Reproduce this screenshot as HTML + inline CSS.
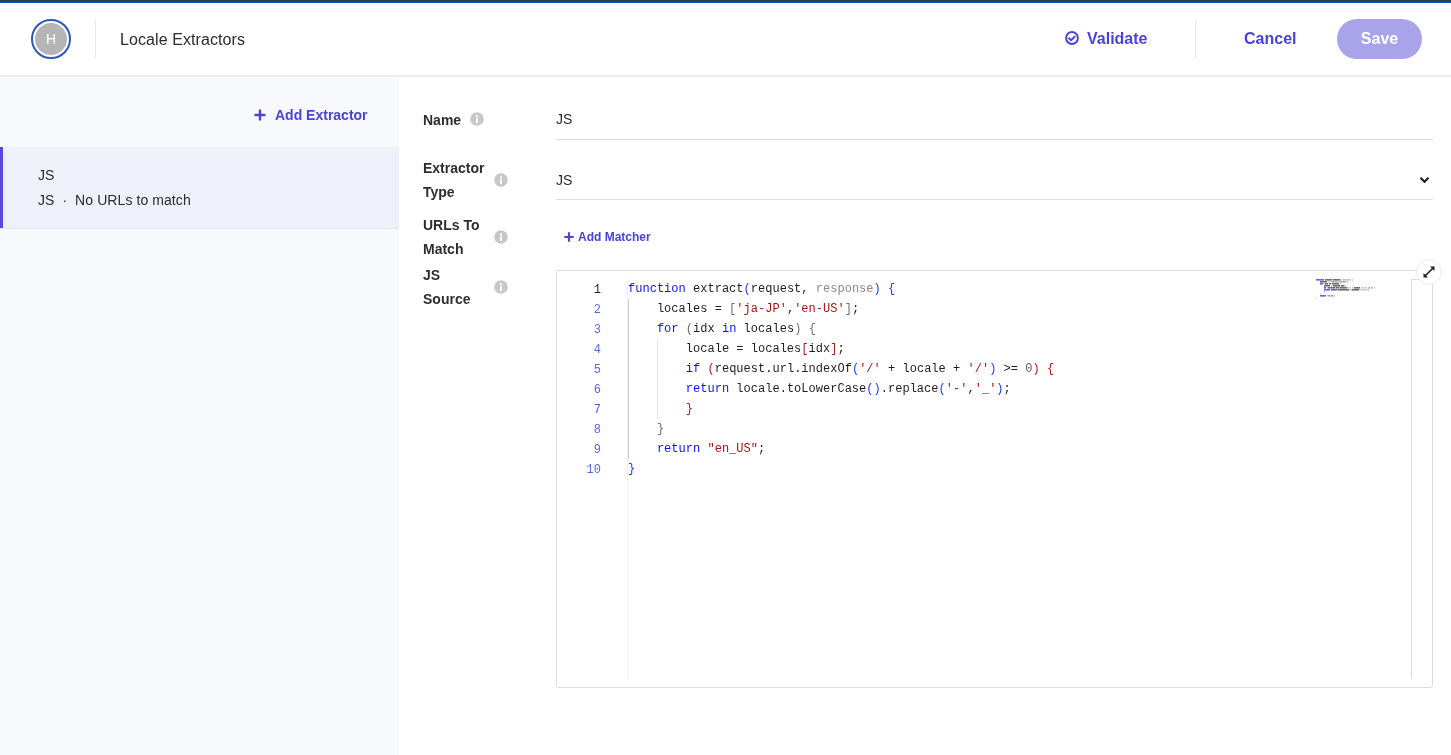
<!DOCTYPE html>
<html><head><meta charset="utf-8">
<style>
*{box-sizing:border-box;margin:0;padding:0}
html,body{width:1451px;height:755px;overflow:hidden;background:#fff;-webkit-font-smoothing:antialiased;font-family:"Liberation Sans",sans-serif;color:#222}
.abs{position:absolute}
.title,.btnlink,.save,.additem,.sel,.label,.field,.editor,.avatar{will-change:transform}
.topbar{position:absolute;left:0;top:0;width:1451px;height:2px;background:#3c3c3c}
.topline{position:absolute;left:0;top:2px;width:1451px;height:1px;background:#0a55c8}
.hborder{position:absolute;left:0;top:75px;width:1451px;height:2px;background:#ececec}
.avatar{position:absolute;left:31px;top:19px;width:40px;height:40px;border-radius:50%;border:2px solid #2d58b9;background:#fff}
.avatar .in{position:absolute;left:2px;top:2px;width:32px;height:32px;border-radius:50%;background:#b5b5b5;color:#fff;font-size:14px;text-align:center;line-height:33px}
.vdiv{position:absolute;width:1px;background:#e8e8e8}
.title{position:absolute;left:120px;top:31px;font-size:16px;color:#2b2b2b;white-space:nowrap;letter-spacing:0.08px}
.btnlink{position:absolute;color:#4b43d3;font-weight:bold;font-size:16px;white-space:nowrap}
.save{position:absolute;left:1337px;top:19px;width:85px;height:40px;border-radius:20px;background:#a9a3ea;color:#fff;font-weight:bold;font-size:16px;text-align:center;line-height:40px}
.sidebar{position:absolute;left:0;top:77px;width:399px;height:678px;background:#f8f9fc}
.additem{position:absolute;left:275px;top:107px;color:#4b43d3;font-weight:bold;font-size:14px;white-space:nowrap}
.sel{position:absolute;left:0;top:147px;width:399px;height:82px;background:#eef1fa;border-bottom:1px solid #e4e6ec}
.sel .bar{position:absolute;left:0;top:0;width:3px;height:81px;background:#5849dc}
.sel .t1{position:absolute;left:38px;top:20px;font-size:14px;color:#2b2b2b;letter-spacing:0.08px}
.sel .t2{position:absolute;left:38px;top:45px;font-size:14px;color:#2b2b2b;white-space:nowrap;letter-spacing:0.08px}
.label{position:absolute;left:423px;font-weight:bold;font-size:14px;color:#2e2e2e;line-height:24px}
.info{position:absolute;width:14px;height:14px}
.field{position:absolute;left:556px;width:877px;border-bottom:1px solid #dcdcdc}
.field .v{position:absolute;left:0;font-size:14px;color:#2b2b2b}
.editor{position:absolute;left:556px;top:270px;width:877px;height:418px;border:1px solid #dcdcdc;border-radius:3px;background:#fff}
.code{position:absolute;left:71px;top:8px;font-family:"Liberation Mono",monospace;font-size:12px;line-height:20px;white-space:pre;color:#1e1e1e;letter-spacing:0.02px}
.ln{position:absolute;left:0;top:9px;width:44px;text-align:right;font-family:"Liberation Mono",monospace;font-size:12px;line-height:20px;color:#5b68d8;white-space:pre}
.kw{color:#0f0fff}.b1{color:#1a3cf5}.b2{color:#707070}.b3{color:#a82020}.s{color:#a31515}.p{color:#8a8a8a}.n{color:#5a5a5a}
</style></head><body>
<div class="topbar"></div><div class="topline"></div>
<div class="hborder"></div>
<div class="avatar"><div class="in">H</div></div>
<div class="vdiv" style="left:95px;top:20px;height:38px"></div>
<div class="title">Locale Extractors</div>
<svg class="abs" style="left:1065px;top:31px" width="14" height="14" viewBox="0 0 14 14"><circle cx="7" cy="7" r="5.9" fill="none" stroke="#4b43d3" stroke-width="2"/><path d="M4 7.3 L6.1 9.2 L9.7 5.6" fill="none" stroke="#4b43d3" stroke-width="2" stroke-linecap="round" stroke-linejoin="round"/></svg>
<div class="btnlink" style="left:1087px;top:30px">Validate</div>
<div class="vdiv" style="left:1195px;top:20px;height:38px"></div>
<div class="btnlink" style="left:1244px;top:30px">Cancel</div>
<div class="save">Save</div>

<div class="sidebar"></div>
<svg class="abs" style="left:254px;top:109px" width="12" height="12" viewBox="0 0 12 12"><path d="M6 0.5V11.5M0.5 6H11.5" stroke="#4b43d3" stroke-width="2.4"/></svg>
<div class="additem">Add Extractor</div>
<div class="sel"><div class="bar"></div><div class="t1">JS</div><div class="t2">JS &nbsp;·&nbsp; No URLs to match</div></div>

<div class="label" style="top:108px">Name</div>
<svg class="info" style="left:470px;top:112px" viewBox="0 0 14 14"><circle cx="7" cy="7" r="6.8" fill="#c8c8c8"/><rect x="6" y="3.3" width="2" height="2" fill="#fff"/><rect x="6" y="6.3" width="2" height="4.6" fill="#fff"/></svg>
<div class="field" style="top:100px;height:40px"><div class="v" style="top:11px">JS</div></div>

<div class="label" style="top:156px">Extractor<br>Type</div>
<svg class="info" style="left:494px;top:173px" viewBox="0 0 14 14"><circle cx="7" cy="7" r="6.8" fill="#c8c8c8"/><rect x="6" y="3.3" width="2" height="2" fill="#fff"/><rect x="6" y="6.3" width="2" height="4.6" fill="#fff"/></svg>
<div class="field" style="top:160px;height:40px"><div class="v" style="top:12px">JS</div></div>
<svg class="abs" style="left:1419px;top:176px" width="11" height="8" viewBox="0 0 11 8"><path d="M1.5 1.8 L5.5 5.8 L9.5 1.8" fill="none" stroke="#1e1e1e" stroke-width="2.2"/></svg>

<div class="label" style="top:213px">URLs To<br>Match</div>
<svg class="info" style="left:494px;top:230px" viewBox="0 0 14 14"><circle cx="7" cy="7" r="6.8" fill="#c8c8c8"/><rect x="6" y="3.3" width="2" height="2" fill="#fff"/><rect x="6" y="6.3" width="2" height="4.6" fill="#fff"/></svg>
<svg class="abs" style="left:564px;top:232px" width="10" height="10" viewBox="0 0 10 10"><path d="M5 0.3V9.7M0.3 5H9.7" stroke="#4b43d3" stroke-width="2.2"/></svg>
<div class="btnlink" style="left:578px;top:230px;font-size:12px">Add Matcher</div>

<div class="label" style="top:263px">JS<br>Source</div>
<svg class="info" style="left:494px;top:280px" viewBox="0 0 14 14"><circle cx="7" cy="7" r="6.8" fill="#c8c8c8"/><rect x="6" y="3.3" width="2" height="2" fill="#fff"/><rect x="6" y="6.3" width="2" height="4.6" fill="#fff"/></svg>

<div class="editor">
<div class="abs" style="left:70px;top:8px;width:1px;height:400px;background:#f0f0f0"></div>
<div class="abs" style="left:71px;top:28px;width:1px;height:160px;background:#d0d0d0"></div>
<div class="abs" style="left:100px;top:68px;width:1px;height:80px;background:#e3e3e3"></div>
<div class="abs" style="left:854px;top:8px;width:22px;height:400px;border-left:1px solid #dcdcdc;border-top:1px solid #dcdcdc"></div>
<div class="ln"><span style="color:#1e1e1e">1</span>
2
3
4
5
6
7
8
9
10</div>
<div class="code"><span class="kw">function</span> extract<span class="b1">(</span>request, <span class="p">response</span><span class="b1">)</span> <span class="b1">{</span>
    locales = <span class="b2">[</span><span class="s">&#x27;ja-JP&#x27;</span>,<span class="s">&#x27;en-US&#x27;</span><span class="b2">]</span>;
    <span class="kw">for</span> <span class="b2">(</span>idx <span class="kw">in</span> locales<span class="b2">)</span> <span class="b2">{</span>
        locale = locales<span class="b3">[</span>idx<span class="b3">]</span>;
        <span class="kw">if</span> <span class="b3">(</span>request.url.indexOf<span class="b1">(</span><span class="s">&#x27;/&#x27;</span> + locale + <span class="s">&#x27;/&#x27;</span><span class="b1">)</span> &gt;= <span class="n">0</span><span class="b3">)</span> <span class="b3">{</span>
        <span class="kw">return</span> locale.toLowerCase<span class="b1">()</span>.replace<span class="b1">(</span><span class="s">&#x27;-&#x27;</span>,<span class="s">&#x27;_&#x27;</span><span class="b1">)</span>;
        <span class="b3">}</span>
    <span class="b2">}</span>
    <span class="kw">return</span> <span class="s">&quot;en_US&quot;</span>;
<span class="b1">}</span></div>
<svg class="abs" style="left:759px;top:8px" width="70" height="22" viewBox="0 0 70 22"><rect x="0" y="0" width="1" height="1.6" fill="#2020ff" fill-opacity="0.7"/><rect x="1" y="0" width="1" height="1.6" fill="#2020ff" fill-opacity="0.7"/><rect x="2" y="0" width="1" height="1.6" fill="#2020ff" fill-opacity="0.7"/><rect x="3" y="0" width="1" height="1.6" fill="#2020ff" fill-opacity="0.7"/><rect x="4" y="0" width="1" height="1.6" fill="#2020ff" fill-opacity="0.7"/><rect x="5" y="0" width="1" height="1.6" fill="#2020ff" fill-opacity="0.7"/><rect x="6" y="0" width="1" height="1.6" fill="#2020ff" fill-opacity="0.7"/><rect x="7" y="0" width="1" height="1.6" fill="#2020ff" fill-opacity="0.7"/><rect x="9" y="0" width="1" height="1.6" fill="#333" fill-opacity="0.7"/><rect x="10" y="0" width="1" height="1.6" fill="#333" fill-opacity="0.7"/><rect x="11" y="0" width="1" height="1.6" fill="#333" fill-opacity="0.7"/><rect x="12" y="0" width="1" height="1.6" fill="#333" fill-opacity="0.7"/><rect x="13" y="0" width="1" height="1.6" fill="#333" fill-opacity="0.7"/><rect x="14" y="0" width="1" height="1.6" fill="#333" fill-opacity="0.7"/><rect x="15" y="0" width="1" height="1.6" fill="#333" fill-opacity="0.7"/><rect x="16" y="0" width="1" height="1.6" fill="#5070f0" fill-opacity="0.35"/><rect x="17" y="0" width="1" height="1.6" fill="#333" fill-opacity="0.7"/><rect x="18" y="0" width="1" height="1.6" fill="#333" fill-opacity="0.7"/><rect x="19" y="0" width="1" height="1.6" fill="#333" fill-opacity="0.7"/><rect x="20" y="0" width="1" height="1.6" fill="#333" fill-opacity="0.7"/><rect x="21" y="0" width="1" height="1.6" fill="#333" fill-opacity="0.7"/><rect x="22" y="0" width="1" height="1.6" fill="#333" fill-opacity="0.7"/><rect x="23" y="0" width="1" height="1.6" fill="#333" fill-opacity="0.7"/><rect x="24" y="0" width="1" height="1.6" fill="#333" fill-opacity="0.35"/><rect x="26" y="0" width="1" height="1.6" fill="#aaa" fill-opacity="0.7"/><rect x="27" y="0" width="1" height="1.6" fill="#aaa" fill-opacity="0.7"/><rect x="28" y="0" width="1" height="1.6" fill="#aaa" fill-opacity="0.7"/><rect x="29" y="0" width="1" height="1.6" fill="#aaa" fill-opacity="0.7"/><rect x="30" y="0" width="1" height="1.6" fill="#aaa" fill-opacity="0.7"/><rect x="31" y="0" width="1" height="1.6" fill="#aaa" fill-opacity="0.7"/><rect x="32" y="0" width="1" height="1.6" fill="#aaa" fill-opacity="0.7"/><rect x="33" y="0" width="1" height="1.6" fill="#aaa" fill-opacity="0.7"/><rect x="34" y="0" width="1" height="1.6" fill="#5070f0" fill-opacity="0.35"/><rect x="36" y="0" width="1" height="1.6" fill="#5070f0" fill-opacity="0.35"/><rect x="4" y="2" width="1" height="1.6" fill="#333" fill-opacity="0.7"/><rect x="5" y="2" width="1" height="1.6" fill="#333" fill-opacity="0.7"/><rect x="6" y="2" width="1" height="1.6" fill="#333" fill-opacity="0.7"/><rect x="7" y="2" width="1" height="1.6" fill="#333" fill-opacity="0.7"/><rect x="8" y="2" width="1" height="1.6" fill="#333" fill-opacity="0.7"/><rect x="9" y="2" width="1" height="1.6" fill="#333" fill-opacity="0.7"/><rect x="10" y="2" width="1" height="1.6" fill="#333" fill-opacity="0.7"/><rect x="12" y="2" width="1" height="1.6" fill="#333" fill-opacity="0.35"/><rect x="14" y="2" width="1" height="1.6" fill="#888" fill-opacity="0.35"/><rect x="15" y="2" width="1" height="1.6" fill="#777" fill-opacity="0.35"/><rect x="16" y="2" width="1" height="1.6" fill="#777" fill-opacity="0.7"/><rect x="17" y="2" width="1" height="1.6" fill="#777" fill-opacity="0.7"/><rect x="18" y="2" width="1" height="1.6" fill="#777" fill-opacity="0.35"/><rect x="19" y="2" width="1" height="1.6" fill="#777" fill-opacity="0.7"/><rect x="20" y="2" width="1" height="1.6" fill="#777" fill-opacity="0.7"/><rect x="21" y="2" width="1" height="1.6" fill="#777" fill-opacity="0.35"/><rect x="22" y="2" width="1" height="1.6" fill="#333" fill-opacity="0.35"/><rect x="23" y="2" width="1" height="1.6" fill="#777" fill-opacity="0.35"/><rect x="24" y="2" width="1" height="1.6" fill="#777" fill-opacity="0.7"/><rect x="25" y="2" width="1" height="1.6" fill="#777" fill-opacity="0.7"/><rect x="26" y="2" width="1" height="1.6" fill="#777" fill-opacity="0.35"/><rect x="27" y="2" width="1" height="1.6" fill="#777" fill-opacity="0.7"/><rect x="28" y="2" width="1" height="1.6" fill="#777" fill-opacity="0.7"/><rect x="29" y="2" width="1" height="1.6" fill="#777" fill-opacity="0.35"/><rect x="30" y="2" width="1" height="1.6" fill="#888" fill-opacity="0.35"/><rect x="31" y="2" width="1" height="1.6" fill="#333" fill-opacity="0.35"/><rect x="4" y="4" width="1" height="1.6" fill="#2020ff" fill-opacity="0.7"/><rect x="5" y="4" width="1" height="1.6" fill="#2020ff" fill-opacity="0.7"/><rect x="6" y="4" width="1" height="1.6" fill="#2020ff" fill-opacity="0.7"/><rect x="8" y="4" width="1" height="1.6" fill="#888" fill-opacity="0.35"/><rect x="9" y="4" width="1" height="1.6" fill="#333" fill-opacity="0.7"/><rect x="10" y="4" width="1" height="1.6" fill="#333" fill-opacity="0.7"/><rect x="11" y="4" width="1" height="1.6" fill="#333" fill-opacity="0.7"/><rect x="13" y="4" width="1" height="1.6" fill="#2020ff" fill-opacity="0.7"/><rect x="14" y="4" width="1" height="1.6" fill="#2020ff" fill-opacity="0.7"/><rect x="16" y="4" width="1" height="1.6" fill="#333" fill-opacity="0.7"/><rect x="17" y="4" width="1" height="1.6" fill="#333" fill-opacity="0.7"/><rect x="18" y="4" width="1" height="1.6" fill="#333" fill-opacity="0.7"/><rect x="19" y="4" width="1" height="1.6" fill="#333" fill-opacity="0.7"/><rect x="20" y="4" width="1" height="1.6" fill="#333" fill-opacity="0.7"/><rect x="21" y="4" width="1" height="1.6" fill="#333" fill-opacity="0.7"/><rect x="22" y="4" width="1" height="1.6" fill="#333" fill-opacity="0.7"/><rect x="23" y="4" width="1" height="1.6" fill="#888" fill-opacity="0.35"/><rect x="25" y="4" width="1" height="1.6" fill="#888" fill-opacity="0.35"/><rect x="8" y="6" width="1" height="1.6" fill="#333" fill-opacity="0.7"/><rect x="9" y="6" width="1" height="1.6" fill="#333" fill-opacity="0.7"/><rect x="10" y="6" width="1" height="1.6" fill="#333" fill-opacity="0.7"/><rect x="11" y="6" width="1" height="1.6" fill="#333" fill-opacity="0.7"/><rect x="12" y="6" width="1" height="1.6" fill="#333" fill-opacity="0.7"/><rect x="13" y="6" width="1" height="1.6" fill="#333" fill-opacity="0.7"/><rect x="15" y="6" width="1" height="1.6" fill="#333" fill-opacity="0.35"/><rect x="17" y="6" width="1" height="1.6" fill="#333" fill-opacity="0.7"/><rect x="18" y="6" width="1" height="1.6" fill="#333" fill-opacity="0.7"/><rect x="19" y="6" width="1" height="1.6" fill="#333" fill-opacity="0.7"/><rect x="20" y="6" width="1" height="1.6" fill="#333" fill-opacity="0.7"/><rect x="21" y="6" width="1" height="1.6" fill="#333" fill-opacity="0.7"/><rect x="22" y="6" width="1" height="1.6" fill="#333" fill-opacity="0.7"/><rect x="23" y="6" width="1" height="1.6" fill="#333" fill-opacity="0.7"/><rect x="24" y="6" width="1" height="1.6" fill="#a03030" fill-opacity="0.35"/><rect x="25" y="6" width="1" height="1.6" fill="#333" fill-opacity="0.7"/><rect x="26" y="6" width="1" height="1.6" fill="#333" fill-opacity="0.7"/><rect x="27" y="6" width="1" height="1.6" fill="#333" fill-opacity="0.7"/><rect x="28" y="6" width="1" height="1.6" fill="#a03030" fill-opacity="0.35"/><rect x="29" y="6" width="1" height="1.6" fill="#333" fill-opacity="0.35"/><rect x="8" y="8" width="1" height="1.6" fill="#2020ff" fill-opacity="0.7"/><rect x="9" y="8" width="1" height="1.6" fill="#2020ff" fill-opacity="0.7"/><rect x="11" y="8" width="1" height="1.6" fill="#a03030" fill-opacity="0.35"/><rect x="12" y="8" width="1" height="1.6" fill="#333" fill-opacity="0.7"/><rect x="13" y="8" width="1" height="1.6" fill="#333" fill-opacity="0.7"/><rect x="14" y="8" width="1" height="1.6" fill="#333" fill-opacity="0.7"/><rect x="15" y="8" width="1" height="1.6" fill="#333" fill-opacity="0.7"/><rect x="16" y="8" width="1" height="1.6" fill="#333" fill-opacity="0.7"/><rect x="17" y="8" width="1" height="1.6" fill="#333" fill-opacity="0.7"/><rect x="18" y="8" width="1" height="1.6" fill="#333" fill-opacity="0.7"/><rect x="19" y="8" width="1" height="1.6" fill="#333" fill-opacity="0.35"/><rect x="20" y="8" width="1" height="1.6" fill="#333" fill-opacity="0.7"/><rect x="21" y="8" width="1" height="1.6" fill="#333" fill-opacity="0.7"/><rect x="22" y="8" width="1" height="1.6" fill="#333" fill-opacity="0.7"/><rect x="23" y="8" width="1" height="1.6" fill="#333" fill-opacity="0.35"/><rect x="24" y="8" width="1" height="1.6" fill="#333" fill-opacity="0.7"/><rect x="25" y="8" width="1" height="1.6" fill="#333" fill-opacity="0.7"/><rect x="26" y="8" width="1" height="1.6" fill="#333" fill-opacity="0.7"/><rect x="27" y="8" width="1" height="1.6" fill="#333" fill-opacity="0.7"/><rect x="28" y="8" width="1" height="1.6" fill="#333" fill-opacity="0.7"/><rect x="29" y="8" width="1" height="1.6" fill="#333" fill-opacity="0.7"/><rect x="30" y="8" width="1" height="1.6" fill="#333" fill-opacity="0.7"/><rect x="31" y="8" width="1" height="1.6" fill="#5070f0" fill-opacity="0.35"/><rect x="32" y="8" width="1" height="1.6" fill="#777" fill-opacity="0.35"/><rect x="33" y="8" width="1" height="1.6" fill="#777" fill-opacity="0.35"/><rect x="34" y="8" width="1" height="1.6" fill="#777" fill-opacity="0.35"/><rect x="36" y="8" width="1" height="1.6" fill="#333" fill-opacity="0.35"/><rect x="38" y="8" width="1" height="1.6" fill="#333" fill-opacity="0.7"/><rect x="39" y="8" width="1" height="1.6" fill="#333" fill-opacity="0.7"/><rect x="40" y="8" width="1" height="1.6" fill="#333" fill-opacity="0.7"/><rect x="41" y="8" width="1" height="1.6" fill="#333" fill-opacity="0.7"/><rect x="42" y="8" width="1" height="1.6" fill="#333" fill-opacity="0.7"/><rect x="43" y="8" width="1" height="1.6" fill="#333" fill-opacity="0.7"/><rect x="45" y="8" width="1" height="1.6" fill="#333" fill-opacity="0.35"/><rect x="47" y="8" width="1" height="1.6" fill="#777" fill-opacity="0.35"/><rect x="48" y="8" width="1" height="1.6" fill="#777" fill-opacity="0.35"/><rect x="49" y="8" width="1" height="1.6" fill="#777" fill-opacity="0.35"/><rect x="50" y="8" width="1" height="1.6" fill="#5070f0" fill-opacity="0.35"/><rect x="52" y="8" width="1" height="1.6" fill="#333" fill-opacity="0.35"/><rect x="53" y="8" width="1" height="1.6" fill="#333" fill-opacity="0.35"/><rect x="55" y="8" width="1" height="1.6" fill="#777" fill-opacity="0.7"/><rect x="56" y="8" width="1" height="1.6" fill="#a03030" fill-opacity="0.35"/><rect x="58" y="8" width="1" height="1.6" fill="#a03030" fill-opacity="0.35"/><rect x="8" y="10" width="1" height="1.6" fill="#2020ff" fill-opacity="0.7"/><rect x="9" y="10" width="1" height="1.6" fill="#2020ff" fill-opacity="0.7"/><rect x="10" y="10" width="1" height="1.6" fill="#2020ff" fill-opacity="0.7"/><rect x="11" y="10" width="1" height="1.6" fill="#2020ff" fill-opacity="0.7"/><rect x="12" y="10" width="1" height="1.6" fill="#2020ff" fill-opacity="0.7"/><rect x="13" y="10" width="1" height="1.6" fill="#2020ff" fill-opacity="0.7"/><rect x="15" y="10" width="1" height="1.6" fill="#333" fill-opacity="0.7"/><rect x="16" y="10" width="1" height="1.6" fill="#333" fill-opacity="0.7"/><rect x="17" y="10" width="1" height="1.6" fill="#333" fill-opacity="0.7"/><rect x="18" y="10" width="1" height="1.6" fill="#333" fill-opacity="0.7"/><rect x="19" y="10" width="1" height="1.6" fill="#333" fill-opacity="0.7"/><rect x="20" y="10" width="1" height="1.6" fill="#333" fill-opacity="0.7"/><rect x="21" y="10" width="1" height="1.6" fill="#333" fill-opacity="0.35"/><rect x="22" y="10" width="1" height="1.6" fill="#333" fill-opacity="0.7"/><rect x="23" y="10" width="1" height="1.6" fill="#333" fill-opacity="0.7"/><rect x="24" y="10" width="1" height="1.6" fill="#333" fill-opacity="0.7"/><rect x="25" y="10" width="1" height="1.6" fill="#333" fill-opacity="0.7"/><rect x="26" y="10" width="1" height="1.6" fill="#333" fill-opacity="0.7"/><rect x="27" y="10" width="1" height="1.6" fill="#333" fill-opacity="0.7"/><rect x="28" y="10" width="1" height="1.6" fill="#333" fill-opacity="0.7"/><rect x="29" y="10" width="1" height="1.6" fill="#333" fill-opacity="0.7"/><rect x="30" y="10" width="1" height="1.6" fill="#333" fill-opacity="0.7"/><rect x="31" y="10" width="1" height="1.6" fill="#333" fill-opacity="0.7"/><rect x="32" y="10" width="1" height="1.6" fill="#333" fill-opacity="0.7"/><rect x="33" y="10" width="1" height="1.6" fill="#5070f0" fill-opacity="0.35"/><rect x="34" y="10" width="1" height="1.6" fill="#5070f0" fill-opacity="0.35"/><rect x="35" y="10" width="1" height="1.6" fill="#333" fill-opacity="0.35"/><rect x="36" y="10" width="1" height="1.6" fill="#333" fill-opacity="0.7"/><rect x="37" y="10" width="1" height="1.6" fill="#333" fill-opacity="0.7"/><rect x="38" y="10" width="1" height="1.6" fill="#333" fill-opacity="0.7"/><rect x="39" y="10" width="1" height="1.6" fill="#333" fill-opacity="0.7"/><rect x="40" y="10" width="1" height="1.6" fill="#333" fill-opacity="0.7"/><rect x="41" y="10" width="1" height="1.6" fill="#333" fill-opacity="0.7"/><rect x="42" y="10" width="1" height="1.6" fill="#333" fill-opacity="0.7"/><rect x="43" y="10" width="1" height="1.6" fill="#5070f0" fill-opacity="0.35"/><rect x="44" y="10" width="1" height="1.6" fill="#777" fill-opacity="0.35"/><rect x="45" y="10" width="1" height="1.6" fill="#777" fill-opacity="0.35"/><rect x="46" y="10" width="1" height="1.6" fill="#777" fill-opacity="0.35"/><rect x="47" y="10" width="1" height="1.6" fill="#333" fill-opacity="0.35"/><rect x="48" y="10" width="1" height="1.6" fill="#777" fill-opacity="0.35"/><rect x="49" y="10" width="1" height="1.6" fill="#777" fill-opacity="0.35"/><rect x="50" y="10" width="1" height="1.6" fill="#777" fill-opacity="0.35"/><rect x="51" y="10" width="1" height="1.6" fill="#5070f0" fill-opacity="0.35"/><rect x="52" y="10" width="1" height="1.6" fill="#333" fill-opacity="0.35"/><rect x="8" y="12" width="1" height="1.6" fill="#a03030" fill-opacity="0.35"/><rect x="4" y="14" width="1" height="1.6" fill="#888" fill-opacity="0.35"/><rect x="4" y="16" width="1" height="1.6" fill="#2020ff" fill-opacity="0.7"/><rect x="5" y="16" width="1" height="1.6" fill="#2020ff" fill-opacity="0.7"/><rect x="6" y="16" width="1" height="1.6" fill="#2020ff" fill-opacity="0.7"/><rect x="7" y="16" width="1" height="1.6" fill="#2020ff" fill-opacity="0.7"/><rect x="8" y="16" width="1" height="1.6" fill="#2020ff" fill-opacity="0.7"/><rect x="9" y="16" width="1" height="1.6" fill="#2020ff" fill-opacity="0.7"/><rect x="11" y="16" width="1" height="1.6" fill="#777" fill-opacity="0.35"/><rect x="12" y="16" width="1" height="1.6" fill="#777" fill-opacity="0.7"/><rect x="13" y="16" width="1" height="1.6" fill="#777" fill-opacity="0.7"/><rect x="14" y="16" width="1" height="1.6" fill="#777" fill-opacity="0.35"/><rect x="15" y="16" width="1" height="1.6" fill="#777" fill-opacity="0.7"/><rect x="16" y="16" width="1" height="1.6" fill="#777" fill-opacity="0.7"/><rect x="17" y="16" width="1" height="1.6" fill="#777" fill-opacity="0.35"/><rect x="18" y="16" width="1" height="1.6" fill="#333" fill-opacity="0.35"/><rect x="0" y="18" width="1" height="1.6" fill="#5070f0" fill-opacity="0.35"/></svg>
</div>
<div class="abs" style="left:1416px;top:259px;width:26px;height:26px;border-radius:50%;background:#fff;border:1px solid #e9e9e9"></div>
<svg class="abs" style="left:1421px;top:264px" width="16" height="16" viewBox="0 0 16 16"><path d="M4.5 11.5 L11.5 4.5" stroke="#1e1e1e" stroke-width="1.6"/><path d="M2.5 13.5 L2.5 9 L7 13.5 Z" fill="#1e1e1e"/><path d="M13.5 2.5 L13.5 7 L9 2.5 Z" fill="#1e1e1e"/></svg>
</body></html>
